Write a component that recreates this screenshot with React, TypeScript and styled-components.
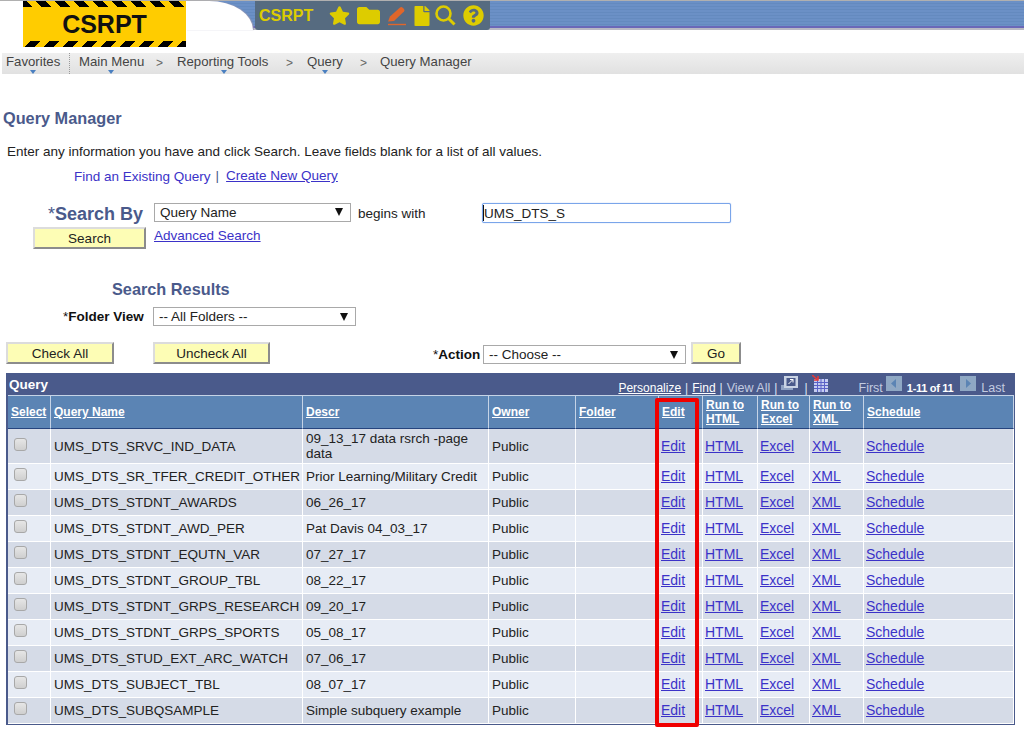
import React from 'react';
import styled, { createGlobalStyle } from 'styled-components';
import { FaStar, FaFolder, FaFile, FaQuestionCircle } from 'react-icons/fa';

const GlobalStyle = createGlobalStyle`
  html, body {
    margin: 0;
    background: #fff;
    font-family: "Liberation Sans", Arial, sans-serif;
    font-size: 13.5px;
    color: #222;
  }
  * { box-sizing: border-box; }
`;

const Page = styled.div`
  width: 1024px;
  height: 729px;
  overflow: hidden;
`;

// banner
const Header = styled.header`
  display: flex;
  height: 53px;
  border-top: 1px solid #b0b0b0;
`;

const Logo = styled.div`
  margin-left: 23px;
  width: 163px;
  height: 46px;
  background: #ffcc00;
  display: flex;
  flex-direction: column;
  justify-content: space-between;
  align-items: center;
`;

const HazardStripe = styled.div<{ $flip?: boolean }>`
  width: 100%;
  height: 6px;
  background: repeating-linear-gradient(${p => (p.$flip ? '-45deg' : '45deg')}, #000 0 6.7px, #ffcc00 6.7px 13.4px);
`;

const LogoText = styled.div`
  font-size: 25px;
  font-weight: 700;
  color: #111;
  line-height: 28px;
`;

const Banner = styled.div`
  flex: 1;
  display: flex;
  align-items: flex-start;
  height: 29px;
  border-bottom: 2px solid #b9b9c4;
  background: repeating-linear-gradient(180deg, #6b90c6 0 2px, #648abf 2px 3px);
  box-shadow: inset 0 -2px 0 #6a68b8;
`;

const BannerCurve = styled.div`
  flex: none;
  width: 67px;
  height: 29px;
  margin-right: 2px;
  background: #fff;
  border-top-right-radius: 44px 29px;
  box-shadow: 1px 0 1px #9a9ab5;
`;

const Toolbar = styled.div`
  flex: none;
  width: 235px;
  height: 29px;
  display: flex;
  align-items: center;
  background: #566b80;
  border-radius: 0 0 3px 3px;
  padding-left: 4px;
  color: #ddcc00;
`;

const ToolbarTitle = styled.span`
  width: 70px;
  font-size: 16px;
  font-weight: 700;
`;

const ToolIcon = styled.span<{ $w: number }>`
  width: ${p => p.$w}px;
  display: flex;
  align-items: center;
  font-size: 21px;
`;

// breadcrumb
const NavBar = styled.nav`
  display: flex;
  align-items: center;
  height: 21px;
  margin-left: 2px;
  padding-left: 4px;
  background: linear-gradient(180deg, #efefef 0%, #e1e1e1 100%);
  font-size: 13.2px;
  color: #444;
`;

const NavItem = styled.span<{ $arrow?: number; $w: number }>`
  position: relative;
  width: ${p => p.$w}px;
  flex: none;
  line-height: 16px;
  margin-top: -3px;
  white-space: nowrap;
  &::after {
    content: '';
    display: ${p => (p.$arrow ? 'block' : 'none')};
    position: absolute;
    left: ${p => (p.$arrow ?? 0) - 3.5}px;
    top: 16px;
    border: 3.5px solid transparent;
    border-top: 4px solid #4a7fc0;
    border-bottom: 0;
  }
`;

const NavDivider = styled.span`
  width: 0;
  height: 21px;
  margin-right: 9px;
  border-left: 1px dotted #999;
`;

const NavChevron = styled.span<{ $w: number }>`
  flex: none;
  width: ${p => p.$w}px;
  margin-top: -2px;
  color: #666;
  font-size: 12px;
`;

// page content
const Title = styled.h1`
  margin: 35px 0 0 3px;
  font-size: 16.3px;
  line-height: 18px;
  font-weight: 700;
  color: #4a5a8b;
`;

const Intro = styled.p`
  margin: 17px 0 0 7px;
  line-height: 16px;
  font-size: 13.5px;
  color: #222;
`;

const TabLinks = styled.div`
  display: flex;
  align-items: flex-start;
  margin-top: 8px;
  padding-left: 74px;
  line-height: 16px;
`;

const Link = styled.a`
  color: #3b32c8;
  text-decoration: underline;
  cursor: pointer;
`;

const PlainLink = styled(Link)`
  text-decoration: none;
  margin-top: 1px;
`;

const AdvancedLink = styled(Link)`
  margin-left: 8px;
  margin-top: -5px;
`;

const Pipe = styled.span`
  margin: 0 7px 0 5px;
  color: #4a5a8b;
`;

const FormRow = styled.div<{ $top: number; $left: number }>`
  display: flex;
  align-items: center;
  margin-top: ${p => p.$top}px;
  padding-left: ${p => p.$left}px;
`;

const Label = styled.label<{ $w: number }>`
  flex: none;
  width: ${p => p.$w}px;
  font-weight: 700;
  white-space: nowrap;
  color: #111;
  & > i {
    font-style: normal;
    font-weight: 400;
  }
`;

const SearchByLabel = styled(Label)`
  height: 20px;
  font-size: 18px;
  line-height: 22px;
  color: #4a5a8b;
`;

const Select = styled.div<{ $w: number }>`
  flex: none;
  display: flex;
  align-items: center;
  justify-content: space-between;
  width: ${p => p.$w}px;
  height: 19px;
  padding: 0 7px 0 5px;
  background: #fff;
  border: 1px solid #a9a9a9;
  color: #222;
`;

const SearchSelect = styled(Select)`
  align-self: flex-start;
  padding-bottom: 1px;
`;

const SelectArrow = styled.span`
  width: 0;
  height: 0;
  border-left: 4px solid transparent;
  border-right: 4px solid transparent;
  border-top: 8px solid #111;
`;

const Operator = styled.span`
  flex: none;
  width: 124px;
  margin-left: 7px;
  margin-top: 1px;
`;

const InputWrap = styled.div`
  position: relative;
  width: 249px;
  height: 20px;
`;

const TextInput = styled.input`
  width: 100%;
  height: 100%;
  padding: 0 0 0 1px;
  border: 1px solid #7aa5ea;
  border-radius: 2px;
  box-shadow: 0 0 1px #7aa5ea;
  font: 13.5px "Liberation Sans", Arial, sans-serif;
  color: #222;
  outline: none;
`;

const Caret = styled.span`
  position: absolute;
  left: 1px;
  top: 2px;
  width: 1px;
  height: 16px;
  background: #111;
`;

const Button = styled.button<{ $w: number; $gap?: number }>`
  flex: none;
  width: ${p => p.$w}px;
  height: 22px;
  margin-left: ${p => p.$gap ?? 0}px;
  padding: 0;
  background: #fdfdb5;
  border: 2px solid;
  border-color: #dcdcdc #8c8c8c #8c8c8c #dcdcdc;
  font: 13.5px "Liberation Sans", Arial, sans-serif;
  color: #222;
`;

const SectionTitle = styled.h2`
  margin: 31px 0 0 112px;
  font-size: 16.3px;
  line-height: 18px;
  font-weight: 700;
  color: #4a5a8b;
`;

const ActionRow = styled.div`
  display: flex;
  margin-top: 16px;
  padding-left: 6px;
`;

const ActionGroup = styled.div`
  display: flex;
  align-items: center;
  margin-left: 163px;
`;

const ActionSelect = styled(Select)`
  margin: 3px 5px 0 3px;
`;

const ActionLabel = styled(Label)`
  margin-top: 3px;
`;

// results grid
const Grid = styled.section`
  position: relative;
  width: 1009px;
  margin: 9px 0 0 6px;
  padding: 0 1px 1px 2px;
  background: #4a5a8b;
`;

const GridBar = styled.div`
  display: flex;
  align-items: center;
  height: 22px;
  font-size: 12px;
  color: #fff;
`;

const GridTitle = styled.span`
  flex: 1;
  padding-left: 1px;
  font-size: 13.5px;
  font-weight: 700;
`;

const BarLink = styled.a`
  color: #fff;
  text-decoration: underline;
  margin-top: 8px;
`;

const BarMuted = styled.span<{ $end?: number }>`
  color: #c3cbe0;
  font-size: 12.5px;
  margin: 8px ${p => p.$end ?? 0}px 0 0;
`;

const BarSep = styled.span`
  margin: 8px 4px 0;
  color: #dde6f5;
`;

const BarCount = styled.span`
  margin: 8px 7px 0 5px;
  font-size: 11px;
  letter-spacing: -0.3px;
  font-weight: 700;
`;

const BarIcon = styled.span<{ $l: number; $r: number }>`
  display: flex;
  margin: -1px ${p => p.$r}px 0 ${p => p.$l}px;
`;

const Table = styled.table`
  width: 1006px;
  table-layout: fixed;
  border-collapse: separate;
  border-spacing: 0;
`;

const HeadCell = styled.th`
  height: 34px;
  padding: 0 3px 0 3px;
  background: #5b84b4;
  border-top: 1px solid #c5d3e6;
  border-right: 1px solid #c5d3e6;
  border-bottom: 1px solid #26447e;
  text-align: left;
  vertical-align: middle;
  font-size: 12px;
  line-height: 14px;
  font-weight: 700;
  & a {
    color: #fff;
    text-decoration: underline;
  }
`;

const Row = styled.tr<{ $odd: boolean }>`
  background: ${p => (p.$odd ? '#d5dbe7' : '#e7ecf5')};
`;

const Cell = styled.td<{ $tall: boolean }>`
  height: ${p => (p.$tall ? 35 : 26)}px;
  padding: 0 0 0 3px;
  border-right: 1px solid #fff;
  border-bottom: 1px solid #fff;
  font-size: 13.5px;
  line-height: 15px;
  color: #222;
  vertical-align: middle;
  white-space: normal;
  overflow: hidden;
`;

const LinkCell = styled(Cell)`
  padding-left: 2px;
  font-size: 14px;
`;

const CheckCell = styled(Cell)`
  padding: 0 0 0 6px;
`;

const Check = styled.input`
  appearance: none;
  display: block;
  width: 13px;
  height: 13px;
  margin: -4px 0 0;
  border: 1px solid #a8a8a8;
  border-radius: 3px;
  background: linear-gradient(180deg, #e6e6e6, #cfcfcf);
`;

const EditHighlight = styled.div`
  position: absolute;
  left: 649px;
  top: 25px;
  width: 44px;
  height: 329px;
  border: 4px solid #f00000;
  border-radius: 2px;
  pointer-events: none;
`;

const columns = [
  { w: 43, label: ['Select'] },
  { w: 252, label: ['Query Name'] },
  { w: 186, label: ['Descr'] },
  { w: 87, label: ['Owner'] },
  { w: 83, label: ['Folder'] },
  { w: 44, label: ['Edit'] },
  { w: 55, label: ['Run to', 'HTML'] },
  { w: 52, label: ['Run to', 'Excel'] },
  { w: 54, label: ['Run to', 'XML'] },
  { w: 150, label: ['Schedule'] },
];

const rows = [
  ['UMS_DTS_SRVC_IND_DATA', '09_13_17 data rsrch -page data'],
  ['UMS_DTS_SR_TFER_CREDIT_OTHER', 'Prior Learning/Military Credit'],
  ['UMS_DTS_STDNT_AWARDS', '06_26_17'],
  ['UMS_DTS_STDNT_AWD_PER', 'Pat Davis 04_03_17'],
  ['UMS_DTS_STDNT_EQUTN_VAR', '07_27_17'],
  ['UMS_DTS_STDNT_GROUP_TBL', '08_22_17'],
  ['UMS_DTS_STDNT_GRPS_RESEARCH', '09_20_17'],
  ['UMS_DTS_STDNT_GRPS_SPORTS', '05_08_17'],
  ['UMS_DTS_STUD_EXT_ARC_WATCH', '07_06_17'],
  ['UMS_DTS_SUBJECT_TBL', '08_07_17'],
  ['UMS_DTS_SUBQSAMPLE', 'Simple subquery example'],
];

const PencilIcon = () => (
  <svg width="20" height="20" viewBox="0 0 20 20">
    <path d="M1 15.5 L3 10.5 L13 1.5 Q14.5 .5 16 2 L17 3 Q18 4.5 17 5.5 L7 15 Z" fill="#e0662a" />
    <path d="M1 18.5 H19" stroke="#e0662a" strokeWidth="1.4" />
  </svg>
);

const SearchIcon = () => (
  <svg width="21" height="21" viewBox="0 0 21 21" fill="none" stroke="#ddcc00">
    <circle cx="8.5" cy="8.5" r="7" strokeWidth="2.6" />
    <path d="M13.5 13.5 L19.5 19.5" strokeWidth="3" />
  </svg>
);

const ZoomIcon = () => (
  <svg width="17" height="15" viewBox="0 0 17 15">
    <rect x="0" y="9" width="12" height="5" fill="#8fa2c4" />
    <rect x="3" y="0" width="14" height="12" fill="#c9d3e4" />
    <rect x="5.5" y="2" width="9" height="8" fill="#4a5a8b" />
    <path d="M7.5 8 L12 3.5 M9 3.5 H12 V6.5" stroke="#fff" fill="none" />
  </svg>
);

const DownloadIcon = () => (
  <svg width="16" height="17" viewBox="0 0 16 17">
    <rect x="2" y="4" width="14" height="13" fill="#c5cdf0" />
    <path d="M5.5 4 V17 M9 4 V17 M12.5 4 V17 M2 7.5 H16 M2 10.5 H16 M2 13.5 H16" stroke="#5a62c8" />
    <path d="M0 0 L6 5 M2 5 H6 V1" stroke="#e23a3a" strokeWidth="1.6" fill="none" />
  </svg>
);

const PageArrow = ({ dir }: { dir: 'left' | 'right' }) => (
  <svg width="16" height="15" viewBox="0 0 16 15">
    <rect width="16" height="15" fill="#8fa8c4" />
    <path d={dir === 'left' ? 'M10 3 V12 L5 7.5 Z' : 'M6 3 V12 L11 7.5 Z'} fill="#5b84b4" />
  </svg>
);

const App: React.FC = () => (
  <Page>
    <GlobalStyle />
    <Header>
      <Logo>
        <HazardStripe />
        <LogoText>CSRPT</LogoText>
        <HazardStripe $flip />
      </Logo>
      <Banner>
        <BannerCurve />
        <Toolbar>
          <ToolbarTitle>CSRPT</ToolbarTitle>
          <ToolIcon $w={28}><FaStar size={21} /></ToolIcon>
          <ToolIcon $w={30}><FaFolder size={23} /></ToolIcon>
          <ToolIcon $w={25}><PencilIcon /></ToolIcon>
          <ToolIcon $w={23}><FaFile size={20} /></ToolIcon>
          <ToolIcon $w={28}><SearchIcon /></ToolIcon>
          <ToolIcon $w={21}><FaQuestionCircle size={21} /></ToolIcon>
        </Toolbar>
      </Banner>
    </Header>

    <NavBar>
      <NavItem $arrow={27} $w={63}>Favorites</NavItem>
      <NavDivider />
      <NavItem $arrow={32} $w={77}>Main Menu</NavItem>
      <NavChevron $w={21}>&gt;</NavChevron>
      <NavItem $arrow={47} $w={109}>Reporting Tools</NavItem>
      <NavChevron $w={21}>&gt;</NavChevron>
      <NavItem $arrow={18} $w={53}>Query</NavItem>
      <NavChevron $w={20}>&gt;</NavChevron>
      <NavItem $w={100}>Query Manager</NavItem>
    </NavBar>

    <Title>Query Manager</Title>
    <Intro>Enter any information you have and click Search. Leave fields blank for a list of all values.</Intro>
    <TabLinks>
      <PlainLink>Find an Existing Query</PlainLink>
      <Pipe>|</Pipe>
      <Link>Create New Query</Link>
    </TabLinks>

    <FormRow $top={18} $left={48}>
      <SearchByLabel $w={106}><i>*</i>Search By</SearchByLabel>
      <SearchSelect $w={197}>Query Name<SelectArrow /></SearchSelect>
      <Operator>begins with</Operator>
      <InputWrap>
        <TextInput readOnly value="UMS_DTS_S" />
        <Caret />
      </InputWrap>
    </FormRow>
    <FormRow $top={4} $left={33}>
      <Button $w={113}>Search</Button>
      <AdvancedLink>Advanced Search</AdvancedLink>
    </FormRow>

    <SectionTitle>Search Results</SectionTitle>
    <FormRow $top={9} $left={63}>
      <Label $w={90}><i>*</i>Folder View</Label>
      <Select $w={203}>-- All Folders --<SelectArrow /></Select>
    </FormRow>
    <ActionRow>
      <Button $w={108}>Check All</Button>
      <Button $w={117} $gap={39}>Uncheck All</Button>
      <ActionGroup>
        <ActionLabel $w={47}><i>*</i>Action</ActionLabel>
        <ActionSelect $w={203}>-- Choose --<SelectArrow /></ActionSelect>
        <Button $w={50}>Go</Button>
      </ActionGroup>
    </ActionRow>

    <Grid>
      <GridBar>
        <GridTitle>Query</GridTitle>
        <BarLink>Personalize</BarLink>
        <BarSep>|</BarSep>
        <BarLink>Find</BarLink>
        <BarSep>|</BarSep>
        <BarMuted>View All</BarMuted>
        <BarSep>|</BarSep>
        <BarIcon $l={0} $r={2}><ZoomIcon /></BarIcon>
        <BarSep>|</BarSep>
        <BarIcon $l={0} $r={31}><DownloadIcon /></BarIcon>
        <BarMuted>First</BarMuted>
        <BarIcon $l={3} $r={0}><PageArrow dir="left" /></BarIcon>
        <BarCount>1-11 of 11</BarCount>
        <BarIcon $l={0} $r={5}><PageArrow dir="right" /></BarIcon>
        <BarMuted $end={9}>Last</BarMuted>
      </GridBar>
      <Table>
        <colgroup>
          {columns.map(c => <col key={c.label.join()} width={c.w} />)}
        </colgroup>
        <thead>
          <tr>
            {columns.map(c => (
              <HeadCell key={c.label.join()}>
                <a>{c.label[0]}{c.label[1] && <><br />{c.label[1]}</>}</a>
              </HeadCell>
            ))}
          </tr>
        </thead>
        <tbody>
          {rows.map((r, i) => (
            <Row key={r[0]} $odd={i % 2 === 0}>
              <CheckCell $tall={i === 0}><Check type="checkbox" readOnly /></CheckCell>
              <Cell $tall={i === 0}>{r[0]}</Cell>
              <Cell $tall={i === 0}>{r[1]}</Cell>
              <Cell $tall={i === 0}>Public</Cell>
              <Cell $tall={i === 0} />
              <LinkCell $tall={i === 0}><Link>Edit</Link></LinkCell>
              <LinkCell $tall={i === 0}><Link>HTML</Link></LinkCell>
              <LinkCell $tall={i === 0}><Link>Excel</Link></LinkCell>
              <LinkCell $tall={i === 0}><Link>XML</Link></LinkCell>
              <LinkCell $tall={i === 0}><Link>Schedule</Link></LinkCell>
            </Row>
          ))}
        </tbody>
      </Table>
      <EditHighlight />
    </Grid>
  </Page>
);

export default App;
